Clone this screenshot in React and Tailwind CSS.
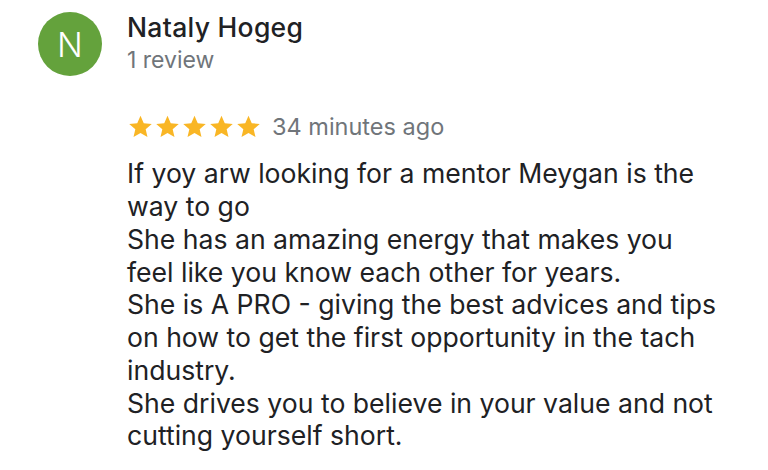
import React from "react";

const lines = [
  "If yoy arw looking for a mentor Meygan is the",
  "way to go",
  "She has an amazing energy that makes you",
  "feel like you know each other for years.",
  "She is A PRO - giving the best advices and tips",
  "on how to get the first opportunity in the tach",
  "industry.",
  "She drives you to believe in your value and not",
  "cutting yourself short.",
];

function Star() {
  return (
    <svg viewBox="0 0 24 24" className="w-[27px] h-[27px]" fill="#f9b625">
      <path d="M12 2.5l2.9 6.6 7.1.6-5.4 4.7 1.6 7-6.2-3.7-6.2 3.7 1.6-7L2 9.7l7.1-.6z" />
    </svg>
  );
}

export default function App() {
  return (
    <div className="w-[768px] h-[470px] bg-white overflow-hidden font-['Inter',sans-serif] text-[#202124]">
      <div className="flex pt-[12px] pl-[38px]">
        <div className="w-[64px] h-[64px] rounded-full bg-[#64a23c] flex items-center justify-center text-white text-[34px] font-light">
          N
        </div>
        <div className="ml-[25px]">
          <div className="text-[26.5px] leading-[30px] font-medium tracking-[0.3px]">Nataly Hogeg</div>
          <div className="text-[23px] leading-[28px] text-[#70757a] mt-[4px]">1 review</div>
        </div>
      </div>
      <div className="pl-[126px]">
        <div className="flex items-center mt-[33px]">
          <div className="flex ml-[1px]">
            <Star />
            <Star />
            <Star />
            <Star />
            <Star />
          </div>
          <span className="ml-[10px] text-[23.5px] text-[#70757a]">34 minutes ago</span>
        </div>
        <div className="mt-[13px] ml-[1px] text-[26.6px] leading-[32.75px] text-[#202124]">
          {lines.map((l, i) => (
            <div key={i} className="whitespace-nowrap">{l}</div>
          ))}
        </div>
      </div>
    </div>
  );
}
